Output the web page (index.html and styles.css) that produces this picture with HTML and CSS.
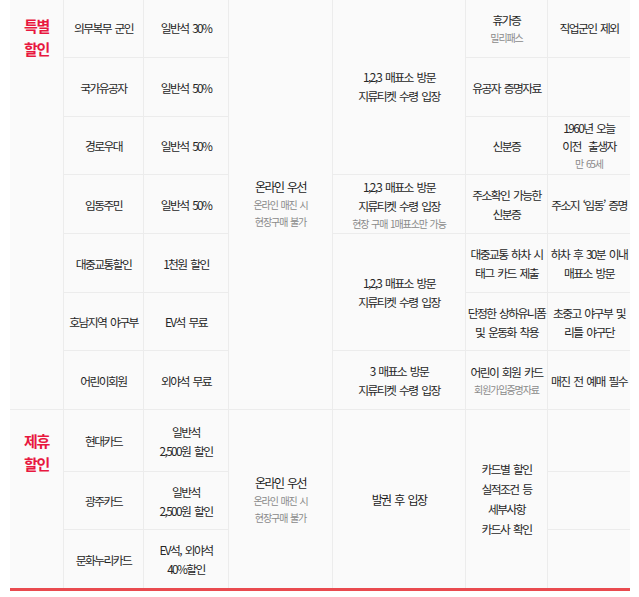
FILE: index.html
```html
<!DOCTYPE html>
<html lang="ko">
<head>
<meta charset="utf-8">
<title>할인 안내</title>
<link rel="stylesheet" href="styles.css">
</head>
<body>
<div class="grid">
  <div class="c cat s7"><span>특별</span><span>할인</span></div>
  <div class="c"><span>의무복무 군인</span></div>
  <div class="c"><span>일반석 30%</span></div>
  <div class="c s7"><span class="m">온라인 우선</span><span class="sub">온라인 매진 시</span><span class="sub">현장구매 불가</span></div>
  <div class="c s3"><span>1,2,3 매표소 방문</span><span>지류티켓 수령 입장</span></div>
  <div class="c"><span>휴가증</span><span class="sub">밀리패스</span></div>
  <div class="c"><span>직업군인 제외</span></div>

  <div class="c"><span>국가유공자</span></div>
  <div class="c"><span>일반석 50%</span></div>
  <div class="c"><span>유공자 증명자료</span></div>
  <div class="c"></div>

  <div class="c"><span>경로우대</span></div>
  <div class="c"><span>일반석 50%</span></div>
  <div class="c"><span>신분증</span></div>
  <div class="c tight"><span>1960년 오늘</span><span>이전&nbsp; 출생자</span><span class="sub">만 65세</span></div>

  <div class="c"><span>임동주민</span></div>
  <div class="c"><span>일반석 50%</span></div>
  <div class="c"><span>1,2,3 매표소 방문</span><span>지류티켓 수령 입장</span><span class="sub">현장 구매 1매표소만 가능</span></div>
  <div class="c"><span>주소확인 가능한</span><span>신분증</span></div>
  <div class="c"><span>주소지 ‘임동’ 증명</span></div>

  <div class="c"><span>대중교통할인</span></div>
  <div class="c"><span>1천원 할인</span></div>
  <div class="c s2"><span>1,2,3 매표소 방문</span><span>지류티켓 수령 입장</span></div>
  <div class="c"><span>대중교통 하차 시</span><span>태그 카드 제출</span></div>
  <div class="c"><span>하차 후 30분 이내</span><span>매표소 방문</span></div>

  <div class="c"><span>호남지역 야구부</span></div>
  <div class="c"><span>EV석 무료</span></div>
  <div class="c"><span>단정한 상하유니폼</span><span>및 운동화 착용</span></div>
  <div class="c"><span>초중고 야구부 및</span><span>리틀 야구단</span></div>

  <div class="c"><span>어린이회원</span></div>
  <div class="c"><span>외야석 무료</span></div>
  <div class="c"><span>3 매표소 방문</span><span>지류티켓 수령 입장</span></div>
  <div class="c"><span>어린이 회원 카드</span><span class="sub">회원가입증명자료</span></div>
  <div class="c"><span>매진 전 예매 필수</span></div>

  <div class="c cat cat2 s3"><span>제휴</span><span>할인</span></div>
  <div class="c"><span>현대카드</span></div>
  <div class="c"><span>일반석</span><span>2,500원 할인</span></div>
  <div class="c s3"><span class="m">온라인 우선</span><span class="sub">온라인 매진 시</span><span class="sub">현장구매 불가</span></div>
  <div class="c s3"><span class="m">발권 후 입장</span></div>
  <div class="c s3 card"><span>카드별 할인</span><span>실적조건 등</span><span>세부사항</span><span>카드사 확인</span></div>
  <div class="c"></div>

  <div class="c"><span>광주카드</span></div>
  <div class="c"><span>일반석</span><span>2,500원 할인</span></div>
  <div class="c"></div>

  <div class="c"><span>문화누리카드</span></div>
  <div class="c"><span>EV석, 외야석</span><span>40%할인</span></div>
  <div class="c"></div>
</div>
</body>
</html>
```
FILE: styles.css
```css
html, body {
  margin: 0;
  padding: 0;
  background: #ffffff;
}

body {
  font-family: "Noto Sans CJK KR", "Noto Sans", sans-serif;
  color: #262626;
}

.grid {
  display: grid;
  grid-template-columns: 53px 79px 84px 103px 132px 81px 82px;
  grid-template-rows: 59px 58px 57px 58px 58px 57px 58px 61px 57px 58px;
  gap: 1px;
  width: 620px;
  margin: -2px 0 0 10px;
  background: #ececec;
  border-bottom: 3px solid #e94a4f;
}

.c {
  background: #fafafa;
  display: flex;
  flex-direction: column;
  align-items: center;
  justify-content: center;
  text-align: center;
  font-size: 11.8px;
  letter-spacing: -1.6px;
  word-spacing: 2px;
  line-height: 19px;
  white-space: nowrap;
  overflow: visible;
}

.s2 { grid-row: span 2; }
.s3 { grid-row: span 3; }
.s7 { grid-row: span 7; }

.c .sub {
  font-size: 10px;
  letter-spacing: -1.1px;
  word-spacing: 1px;
  line-height: 17px;
  color: #8a8a8a;
}

.c .m {
  font-size: 12px;
  color: #1a1a1a;
}

.tight {
  line-height: 18px;
}

.card {
  line-height: 20px;
}

.cat {
  justify-content: flex-start;
  padding-top: 16px;
  font-size: 15px;
  font-weight: 700;
  letter-spacing: -1.3px;
  line-height: 23px;
  color: #e8173f;
}

.cat2 {
  padding-top: 19px;
}
```
